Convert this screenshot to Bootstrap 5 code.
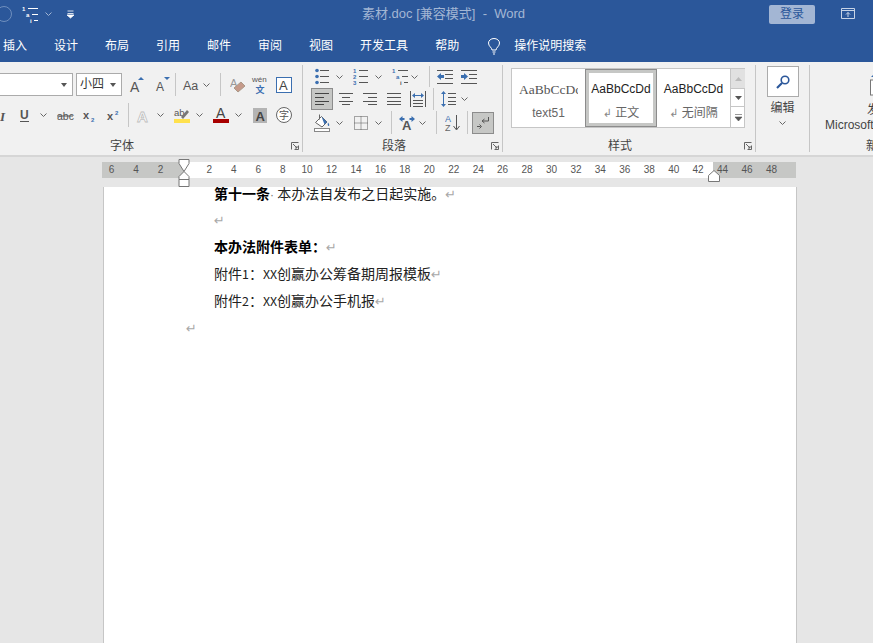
<!DOCTYPE html>
<html lang="zh">
<head>
<meta charset="utf-8">
<title>素材.doc [兼容模式] - Word</title>
<link href="https://cdn.jsdelivr.net/npm/bootstrap@5.3.0/dist/css/bootstrap.min.css" rel="stylesheet">
<style>
html,body{height:100%;overflow:hidden}
body{font-family:"Liberation Sans","Noto Sans CJK SC",sans-serif;font-size:12px;line-height:1.2;background:#e6e6e6;color:#444;width:873px}
svg{display:block;overflow:visible}
.titlebar{height:28px;background:#2b579a;color:#fff}
.qat{width:362px}
.qat-circle{width:16px;height:16px;margin-left:-4px;margin-right:10px;border:1px solid #6f8fbe;border-radius:50%}
.qat-gap{margin-left:7px}
.qat-gap2{margin-left:15px}
.doc-title{font-size:13px;color:#a3b6d4;white-space:pre}
.login{margin-left:auto;margin-right:58px;width:46px;height:19px;background:#a3b6d4;border-radius:2px;color:#2b579a;font-size:12px;line-height:19px;text-align:center}
.winbtn{position:absolute;left:841px;top:8px}
.tabbar{height:34px;background:#2b579a;color:#fff;padding:3px 0 0 3px;gap:27px;font-size:12px}
.tabbar .bulb{margin-left:2px;margin-right:-13px}
.ribbon{height:95px;background:#f1f1f1;border-bottom:2px solid #d6d6d6;overflow:hidden;align-items:flex-start}
.rgroup{flex:none;height:87px;margin-top:3px;border-right:1px solid #c6c6c6;position:relative}
.g-font{width:361px;margin-left:-58px}
.g-para{width:200px}
.g-style{width:253px}
.g-edit{width:54px}
.g-next{width:64px;border-right:0}
.rowg{display:grid;align-items:center;justify-items:start}
.rowg>.sep{width:1px;background:#c6c6c6;align-self:stretch}
.f1{height:23px;margin-top:8px;grid-template-columns:134px 54px 26px 19px 8px 20px 17px 10px 22px 24px 16px}
.f2{height:24px;margin-top:7px;padding-left:52px;grid-template-columns:26px 20px 17px 26px 24px 21px 9px 20px 17px 22px 17px 22px 18px 23px 16px}
.p1{height:21px;margin-top:1px;padding-left:12px;grid-template-columns:21px 17px 22px 17px 19px 18px 8px 24px 18px}
.p2{height:22px;margin-top:1px;padding-left:8px;grid-template-columns:28px 24px 24px 23px 23px 8px 20px 10px}
.p3{height:23px;margin-top:1px;padding-left:11px;grid-template-columns:22px 18px 21px 16px 8px 20px 17px 9px 22px 5px 22px}
.fontbox{height:23px;width:131px;background:#fff;border:1px solid #ababab;position:relative}
.sizebox{height:23px;width:46px;background:#fff;border:1px solid #ababab;padding-left:3px;line-height:21px;color:#333;position:relative}
.drop{position:absolute;right:5px;top:9px;width:0;height:0;border-left:3.5px solid transparent;border-right:3.5px solid transparent;border-top:4px solid #555}
.actbtn{width:22px;height:22px;background:#c6c7c5;border:1px solid #8c8c8c;display:flex;align-items:center;justify-content:center}
.glabel{position:absolute;left:0;right:3px;top:74px;display:grid;align-items:center;font-size:12px;color:#444}
.lf{grid-template-columns:168px 24px 1fr}
.lp{grid-template-columns:79px 24px 1fr}
.ls{grid-template-columns:105px 24px 1fr}
.ln{grid-template-columns:56px 24px 1fr}
.launch{justify-self:end}
.gallery{width:234px;height:60px;margin:3px 0 0 8px;background:#fff;border:1px solid #c6c6c6;display:grid;grid-template-columns:73px 72px 73px 15px}
.sty{display:flex;flex-direction:column;align-items:center;overflow:hidden;padding-top:13px;height:58px;white-space:nowrap}
.sty b{font-weight:400;font-size:12px;color:#222;line-height:15px}
.sty i{font-style:normal;font-size:12px;color:#666;line-height:15px;margin-top:9px;height:15px}
.sty-serif b{font-family:"Liberation Serif","Noto Sans CJK SC",serif;font-size:13.5px;color:#555;align-self:flex-start;margin-left:7px;width:59px;overflow:hidden}
.sty-cur{border:1px solid #8c8c8c;box-shadow:inset 0 0 0 3px #c6c7c5;padding-top:12px}
.sty-bar{border-left:1px solid #c6c6c6;display:grid;grid-template-rows:20px 18px 20px}
.sty-bar div{display:flex;align-items:center;justify-content:center;border-bottom:1px solid #c6c6c6}
.sty-bar div:first-child{background:#e1e1e1}
.sty-bar div:last-child{border-bottom:0}
.editbtn{width:32px;height:31px;margin:1px 0 0 11px;background:#fff;border:1px solid #ababab;display:flex;align-items:center;justify-content:center}
.edit-t{width:54px;padding-right:1px;margin-top:3px;display:flex;flex-direction:column;align-items:center;font-size:12px;gap:6px}
.edit-t span{line-height:14px;margin-top:1px}
.next-ic{margin:7px 0 0 60px}
.next-t1{margin:7px 0 0 57px;line-height:15px;white-space:nowrap}
.next-t2{margin:0 0 0 15px;line-height:15px;white-space:nowrap}
.rulerband{height:30px;background:#e6e6e6;padding:5px 0 0 102px;position:relative}
.ruler{width:694px;height:16px;background:linear-gradient(90deg,#c6c7c5 82px,#fff 82px,#fff 611px,#c6c7c5 611px);display:flex;overflow:hidden}
.ruler span{flex:none;width:24.45px;text-align:center;font-size:10px;line-height:16px;color:#555}
.ruler span:first-child{margin-left:-2.6px}
.mk1{position:absolute;left:178px;top:2px}
.mk2{position:absolute;left:708px;top:13px}
.page{width:694px;height:456px;margin-left:103px;background:#fff;border-left:1px solid #c6c6c6;border-right:1px solid #c6c6c6;padding-left:110px;overflow:hidden;font-family:"Noto Sans CJK SC","Liberation Sans",sans-serif;font-size:14px;color:#222}
.page-in{margin-top:-7.5px}
.ln-doc{height:26.9px;line-height:26.9px;white-space:pre}
.ln-doc strong{font-weight:700;color:#000}
.pm{font-family:"DejaVu Sans",sans-serif;font-size:13px;color:#a8a8a8}
.pm-s{font-size:11px;color:#888}
.dotm{font-family:"Liberation Sans",sans-serif;font-size:12px;color:#777}
.lat{font-size:12.4px}
.ln-out{margin-left:-28px}
</style>
</head>
<body>
<svg width="0" height="0" class="position-absolute">
<defs>
<symbol id="c" viewBox="0 0 7 4"><path d="M.5.5l3 3 3-3" fill="none" stroke="#666"/></symbol>
<symbol id="ul" viewBox="0 0 14 17"><g fill="#3b6fb0"><circle cx="2" cy="2.5" r="1.8"/><circle cx="2" cy="8.5" r="1.8"/><circle cx="2" cy="14.5" r="1.8"/></g><path d="M5 2.5h9M5 8.5h9M5 14.5h9" stroke="#555"/></symbol>
<symbol id="ol" viewBox="0 0 15 17"><g fill="#3b6fb0" font-size="6" font-weight="700" font-family="Liberation Sans"><text x="0" y="5">1</text><text x="0" y="11">2</text><text x="0" y="17">3</text></g><path d="M6 2.5h9M6 8.5h9M6 14.5h9" stroke="#555"/></symbol>
<symbol id="ml" viewBox="0 0 16 17"><g font-size="6" font-weight="700" font-family="Liberation Sans"><text x="0" y="5" fill="#3b6fb0">1</text><text x="4" y="11" fill="#3b6fb0">a</text><text x="8" y="17" fill="#555">i</text></g><path d="M6 2.5h10M10 8.5h6M12 14.5h4" stroke="#555"/></symbol>
<symbol id="mlw" viewBox="0 0 16 17"><g font-size="6" font-weight="700" font-family="Liberation Sans" fill="#fff"><text x="0" y="5">1</text><text x="4" y="11">a</text><text x="8" y="17">i</text></g><path d="M6 2.5h10M10 8.5h6M12 14.5h4" stroke="#fff"/></symbol>
<symbol id="out" viewBox="0 0 16 14"><path d="M0 .5h16M8 4.500h8M8 8.500h8M0 13.500h16" stroke="#555"/><path d="M0 6.500l4-3.500v2h3v3h-3v2z" fill="#3b6fb0"/></symbol>
<symbol id="ind" viewBox="0 0 16 14"><path d="M0 .5h16M8 4.500h8M8 8.500h8M0 13.500h16" stroke="#555"/><path d="M7 6.500l-4-3.500v2h-3v3h3v2z" fill="#3b6fb0"/></symbol>
<symbol id="al" viewBox="0 0 14 12"><path d="M0 .5h14M0 4.500h9M0 8.500h14M0 11.500h9" stroke="#444"/></symbol>
<symbol id="ac" viewBox="0 0 14 12"><path d="M0 .5h14M3 4.500h8M0 8.500h14M3 11.500h8" stroke="#555"/></symbol>
<symbol id="ar" viewBox="0 0 14 12"><path d="M0 .5h14M5 4.500h9M0 8.500h14M5 11.500h9" stroke="#555"/></symbol>
<symbol id="aj" viewBox="0 0 14 12"><path d="M0 .5h14M0 4.500h14M0 8.500h14M0 11.500h14" stroke="#555"/></symbol>
<symbol id="ad" viewBox="0 0 16 16"><path d="M.5 0v16M15.500 0v16M3 9.500h10M3 12.500h10M3 15.500h10" stroke="#555"/><path d="M2 4.500l3-2.500v2h6v-2l3 2.500-3 2.500v-2h-6v2z" fill="#3b6fb0"/></symbol>
<symbol id="lsp" viewBox="0 0 15 16"><path d="M7 2.500h8M7 6.500h8M7 10.500h8M7 13.500h8" stroke="#555"/><path d="M2.500 0l2.500 3h-2v10h2l-2.500 3-2.500-3h2v-10h-2z" fill="#3b6fb0"/></symbol>
<symbol id="shade" viewBox="0 0 16 18"><path d="M1.500 8.500l6-6 5.500 5.500-5 5z" fill="#fff" stroke="#666"/><path d="M5.500 .5v5" stroke="#666"/><path d="M7.500 2.500l5.500 5.500-2.500 2.500c-1-3-2-5-3-8z" fill="#3b6fb0"/><path d="M14 8.500c1 1.500 1.800 2.500 1 3.300s-1.800-.8-1-3.300z" fill="#3b6fb0"/><rect x=".5" y="14.500" width="15" height="3" fill="#fff" stroke="#888"/></symbol>
<symbol id="bd" viewBox="0 0 14 14"><path d="M.5 .5h13v13h-13zM7 .5v13M.5 7h13" fill="none" stroke="#555" stroke-dasharray="1 1"/></symbol>
<symbol id="dir" viewBox="0 0 16 14"><text x="3" y="14" font-size="13" font-weight="700" fill="#555" font-family="Liberation Sans">A</text><path d="M0 3l3.500-3v2h2v2h-2v2zM16 3l-3.500-3v2h-2v2h2v2z" fill="#3b6fb0"/></symbol>
<symbol id="sort" viewBox="0 0 16 17"><g font-size="9" font-family="Liberation Sans"><text x="0" y="8" fill="#3b6fb0">A</text><text x="0" y="17" fill="#666">Z</text></g><path d="M11.500 1v14M8.500 12l3 4 3-4" fill="none" stroke="#555"/></symbol>
<symbol id="pil" viewBox="0 0 14 14"><path d="M12.500 1v4h-6M8.500 3l-2.500 2 2.500 2" fill="none" stroke="#555"/><path d="M1 10.500h3.500M3.500 8.500l2 2-2 2" fill="none" stroke="#555"/></symbol>
<symbol id="lau" viewBox="0 0 8 8"><path d="M.5 7.500v-7h7M7.500 3.500v4h-4M2 2l4 4M6 4v2h-2" fill="none" stroke="#666"/></symbol>
<symbol id="erase" viewBox="0 0 16 16"><text x="0" y="10" font-size="11" fill="#999" font-family="Liberation Sans">A</text><path d="M4 11l7-6 4 4-7 6z" fill="#c59a8a" stroke="#a98"/></symbol>
<symbol id="mag" viewBox="0 0 14 14"><circle cx="9" cy="5" r="3.800" fill="#fff" stroke="#2b579a" stroke-width="1.600"/><path d="M6 8l-5 5" stroke="#2b579a" stroke-width="2.200"/></symbol>
<symbol id="bulb" viewBox="0 0 12 17"><path d="M4 12c0-2.500-3.500-3.500-3.500-7a5.500 4.500 0 0 1 11 0c0 3.500-3.500 4.500-3.500 7zM4.500 14h3M5 16h2" fill="none" stroke="#fff"/></symbol>
</defs>
</svg>

<header class="titlebar d-flex align-items-center position-relative">
  <div class="qat d-flex align-items-center">
    <span class="qat-circle"></span>
    <svg width="16" height="17"><use href="#mlw"/></svg>
    <svg class="qat-gap" width="7" height="4"><path d="M.5.5l3 3 3-3" fill="none" stroke="#a3b6d4"/></svg>
    <svg class="qat-gap2" width="7" height="7"><path d="M.5 0h6M.5 2.500h6M0 4l3.500 3 3.500-3z" stroke="#fff" fill="#fff" stroke-width=".8"/></svg>
  </div>
  <div class="doc-title">素材.doc [兼容模式]  -  Word</div>
  <div class="login">登录</div>
  <svg class="winbtn" width="14" height="11"><path d="M.5.5h13v10h-13zM.5 2.500h13M7 9V4.500M5 6.500l2-2 2 2" fill="none" stroke="#c8d4e6"/></svg>
</header>

<nav class="tabbar d-flex align-items-center">
  <span>插入</span><span>设计</span><span>布局</span><span>引用</span><span>邮件</span><span>审阅</span><span>视图</span><span>开发工具</span><span>帮助</span>
  <svg class="bulb" width="12" height="17"><use href="#bulb"/></svg>
  <span>操作说明搜索</span>
</nav>

<section class="ribbon d-flex">
  <div class="rgroup g-font">
    <div class="rowg f1">
      <div class="fontbox"><span class="drop"></span></div>
      <div class="sizebox">小四<span class="drop"></span></div>
      <svg width="15" height="16"><text x="0" y="15" font-size="14" fill="#555" font-family="Liberation Sans">A</text><path d="M8 3l3-3 3 3z" fill="#3b6fb0"/></svg>
      <svg width="14" height="15"><text x="0" y="14" font-size="12" fill="#555" font-family="Liberation Sans">A</text><path d="M8 0h6l-3 3z" fill="#3b6fb0"/></svg>
      <span class="sep"></span>
      <svg width="18" height="14"><text x="0" y="12" font-size="12.500" fill="#555" font-family="Liberation Sans">Aa</text></svg>
      <svg width="7" height="4"><use href="#c"/></svg>
      <span class="sep"></span>
      <svg width="16" height="16"><use href="#erase"/></svg>
      <svg width="16" height="19"><text x="0" y="7" font-size="8" fill="#555" font-family="Liberation Sans">wén</text><text x="3.500" y="18" font-size="9" font-weight="700" fill="#3b6fb0" font-family="Noto Sans CJK SC">文</text></svg>
      <svg width="16" height="16"><rect x=".5" y=".5" width="15" height="15" fill="#fff" stroke="#3b6fb0"/><text x="3" y="13" font-size="13" fill="#444" font-family="Liberation Sans">A</text></svg>
    </div>
    <div class="rowg f2">
      <svg width="12" height="13"><text x="6" y="12" font-size="13" font-weight="700" font-style="italic" fill="#555" font-family="Liberation Serif">I</text></svg>
      <svg width="9" height="14"><text x="0" y="11" font-size="12" font-weight="700" fill="#555" font-family="Liberation Sans">U</text><path d="M0 13.500h9" stroke="#555"/></svg>
      <svg width="7" height="4"><use href="#c"/></svg>
      <svg width="16" height="13"><text x="0" y="11" font-size="10.500" fill="#555" font-family="Liberation Sans">abc</text><path d="M0 7h16" stroke="#555"/></svg>
      <svg width="13" height="13"><text x="0" y="10" font-size="11" font-weight="700" fill="#555" font-family="Liberation Sans">x</text><text x="8" y="13" font-size="6" font-weight="700" fill="#3b6fb0" font-family="Liberation Sans">2</text></svg>
      <svg width="13" height="13"><text x="0" y="11" font-size="11" font-weight="700" fill="#555" font-family="Liberation Sans">x</text><text x="8" y="6" font-size="6" font-weight="700" fill="#3b6fb0" font-family="Liberation Sans">2</text></svg>
      <span class="sep"></span>
      <svg width="14" height="15"><text x="0" y="14" font-size="15" font-weight="700" fill="#fff" stroke="#c0c0c0" stroke-width=".8" font-family="Liberation Sans">A</text></svg>
      <svg width="7" height="4"><use href="#c"/></svg>
      <svg width="16" height="18"><text x="0" y="10" font-size="9.500" fill="#555" font-family="Liberation Sans">ab</text><path d="M7 11l6-7 2 2-6 7z" fill="#777"/><rect y="13" width="16" height="4" fill="#ffe14d"/></svg>
      <svg width="7" height="4"><use href="#c"/></svg>
      <svg width="16" height="18"><text x="3" y="12" font-size="14" fill="#444" font-family="Liberation Sans">A</text><rect y="13" width="16" height="4" fill="#a80000"/></svg>
      <svg width="7" height="4"><use href="#c"/></svg>
      <svg width="14" height="15"><rect width="14" height="15" fill="#b4b4b4"/><text x="2.500" y="13" font-size="13" font-weight="700" fill="#444" font-family="Liberation Sans">A</text></svg>
      <svg width="16" height="16"><circle cx="8" cy="8" r="7.500" fill="#fff" stroke="#666"/><text x="3" y="12" font-size="10" fill="#555" font-family="Noto Sans CJK SC">字</text></svg>
    </div>
    <div class="glabel lf"><span></span><span>字体</span><svg class="launch" width="8" height="8"><use href="#lau"/></svg></div>
  </div>

  <div class="rgroup g-para">
    <div class="rowg p1">
      <svg width="14" height="17"><use href="#ul"/></svg><svg width="7" height="4"><use href="#c"/></svg>
      <svg width="15" height="17"><use href="#ol"/></svg><svg width="7" height="4"><use href="#c"/></svg>
      <svg width="16" height="17"><use href="#ml"/></svg><svg width="7" height="4"><use href="#c"/></svg>
      <span class="sep"></span>
      <svg width="16" height="14"><use href="#out"/></svg><svg width="16" height="14"><use href="#ind"/></svg>
    </div>
    <div class="rowg p2">
      <span class="actbtn"><svg width="14" height="12"><use href="#al"/></svg></span>
      <svg width="14" height="12"><use href="#ac"/></svg>
      <svg width="14" height="12"><use href="#ar"/></svg>
      <svg width="14" height="12"><use href="#aj"/></svg>
      <svg width="16" height="16"><use href="#ad"/></svg>
      <span class="sep"></span>
      <svg width="15" height="16"><use href="#lsp"/></svg><svg width="7" height="4"><use href="#c"/></svg>
    </div>
    <div class="rowg p3">
      <svg width="16" height="18"><use href="#shade"/></svg><svg width="7" height="4"><use href="#c"/></svg>
      <svg width="14" height="14"><use href="#bd"/></svg><svg width="7" height="4"><use href="#c"/></svg>
      <span class="sep"></span>
      <svg width="16" height="14"><use href="#dir"/></svg><svg width="7" height="4"><use href="#c"/></svg>
      <span class="sep"></span>
      <svg width="16" height="17"><use href="#sort"/></svg>
      <span class="sep"></span>
      <span class="actbtn"><svg width="14" height="14"><use href="#pil"/></svg></span>
    </div>
    <div class="glabel lp"><span></span><span>段落</span><svg class="launch" width="8" height="8"><use href="#lau"/></svg></div>
  </div>

  <div class="rgroup g-style">
    <div class="gallery">
      <div class="sty sty-serif"><b>AaBbCcDc</b><i>text51</i></div>
      <div class="sty sty-cur"><b>AaBbCcDd</b><i><span class="pm pm-s">↲</span> 正文</i></div>
      <div class="sty"><b>AaBbCcDd</b><i><span class="pm pm-s">↲</span> 无间隔</i></div>
      <div class="sty-bar">
        <div><svg width="7" height="4"><path d="M0 4l3.500-4 3.500 4z" fill="#bbb"/></svg></div>
        <div><svg width="7" height="4"><path d="M0 0l3.500 4 3.500-4z" fill="#555"/></svg></div>
        <div><svg width="7" height="7"><path d="M0 .5h7M0 3l3.500 4 3.500-4z" stroke="#555" stroke-width=".6" fill="#555"/></svg></div>
      </div>
    </div>
    <div class="glabel ls"><span></span><span>样式</span><svg class="launch" width="8" height="8"><use href="#lau"/></svg></div>
  </div>

  <div class="rgroup g-edit">
    <div class="editbtn"><svg width="14" height="14"><use href="#mag"/></svg></div>
    <div class="edit-t"><span>编辑</span><svg width="7" height="4"><use href="#c"/></svg></div>
  </div>

  <div class="rgroup g-next">
    <svg class="next-ic" width="10" height="24"><path d="M1 5l3-3 3 3z" fill="#3b6fb0"/><rect x=".5" y="8" width="14" height="15" fill="#fff" stroke="#777"/></svg>
    <div class="next-t1">发</div>
    <div class="next-t2">Microsoft</div>
    <div class="glabel ln"><span></span><span>新</span></div>
  </div>
</section>

<div class="rulerband">
  <div class="ruler">
    <span>6</span><span>4</span><span>2</span><span></span><span>2</span><span>4</span><span>6</span><span>8</span><span>10</span><span>12</span><span>14</span><span>16</span><span>18</span><span>20</span><span>22</span><span>24</span><span>26</span><span>28</span><span>30</span><span>32</span><span>34</span><span>36</span><span>38</span><span>40</span><span>42</span><span>44</span><span>46</span><span>48</span>
  </div>
  <svg class="mk1" width="12" height="28"><path d="M1 .5h10v4l-5 8-5-8z M1 27.500v-7h10v7z M1 20.500v-3l5-5 5 5v3" fill="#fff" stroke="#777"/></svg>
  <svg class="mk2" width="12" height="12"><path d="M.5 11.500v-6l5.500-5 5.500 5v6z" fill="#fff" stroke="#777"/></svg>
</div>

<main class="page">
  <div class="page-in">
    <div class="ln-doc"><strong>第十一条</strong><span class="dotm">· </span>本办法自发布之日起实施。<span class="pm">↵</span></div>
    <div class="ln-doc"><span class="pm">↵</span></div>
    <div class="ln-doc"><strong>本办法附件表单：</strong><span class="pm">↵</span></div>
    <div class="ln-doc">附件<span class="lat">1</span>：<span class="lat">XX</span>创赢办公筹备期周报模板<span class="pm">↵</span></div>
    <div class="ln-doc">附件<span class="lat">2</span>：<span class="lat">XX</span>创赢办公手机报<span class="pm">↵</span></div>
    <div class="ln-doc ln-out"><span class="pm">↵</span></div>
  </div>
</main>
<script src="https://cdn.jsdelivr.net/npm/bootstrap@5.3.0/dist/js/bootstrap.bundle.min.js"></script>
</body>
</html>
